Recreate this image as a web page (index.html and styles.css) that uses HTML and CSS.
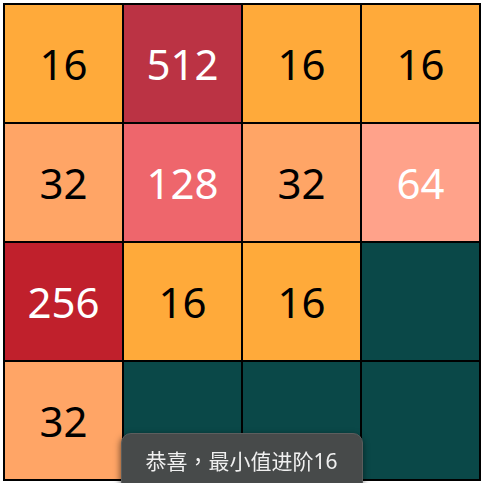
FILE: index.html
```html
<!DOCTYPE html>
<html lang="zh-Hant">
<head>
  <meta charset="UTF-8" />
  <meta name="viewport" content="width=device-width, initial-scale=1.0" />
  <title>2048</title>
  <link rel="stylesheet" href="styles.css">
</head>
<body>
  <div id="board">
    <div class="cell t16">16</div>
    <div class="cell t512">512</div>
    <div class="cell t16">16</div>
    <div class="cell t16">16</div>

    <div class="cell t32">32</div>
    <div class="cell t128">128</div>
    <div class="cell t32">32</div>
    <div class="cell t64">64</div>

    <div class="cell t256">256</div>
    <div class="cell t16">16</div>
    <div class="cell t16">16</div>
    <div class="cell empty"></div>

    <div class="cell t32">32</div>
    <div class="cell empty"></div>
    <div class="cell empty"></div>
    <div class="cell empty"></div>
  </div>

  <div id="toast">恭喜，最小值进阶16</div>
</body>
</html>
```

FILE: styles.css
```css
body {
  margin: 0;
  padding: 3px;
  background: white;
  font-family: "Noto Sans", "Open Sans", sans-serif;
  overflow: hidden;
}

#board {
  display: grid;
  grid-template-columns: repeat(4, 119px);
  grid-template-rows: repeat(4, 119px);
  width: max-content;
  border: 1px solid black;
}

.cell {
  border: 1px solid black;
  display: flex;
  align-items: center;
  justify-content: center;
  font-size: 42px;
  color: black;
}

.t16 { background: #ffaa3a; }
.t32 { background: #ffa566; }
.t64 { background: #ffa28a; color: white; }
.t128 { background: #ee666c; color: white; }
.t256 { background: #c0202c; color: white; }
.t512 { background: #bb3344; color: white; }
.empty { background: #0a4848; }

#toast {
  position: fixed;
  top: 433px;
  left: 50%;
  transform: translateX(-50%);
  height: 80px;
  box-sizing: border-box;
  padding: 11px 24px 0;
  background: #474a4a;
  border: 1px solid #5c5e5e;
  border-radius: 10px;
  box-shadow: 0 2px 6px rgba(0, 0, 0, 0.5);
  color: #f0f0f0;
  font-family: "Noto Sans", "Noto Sans CJK TC", sans-serif;
  font-size: 21px;
  white-space: nowrap;
}
```
